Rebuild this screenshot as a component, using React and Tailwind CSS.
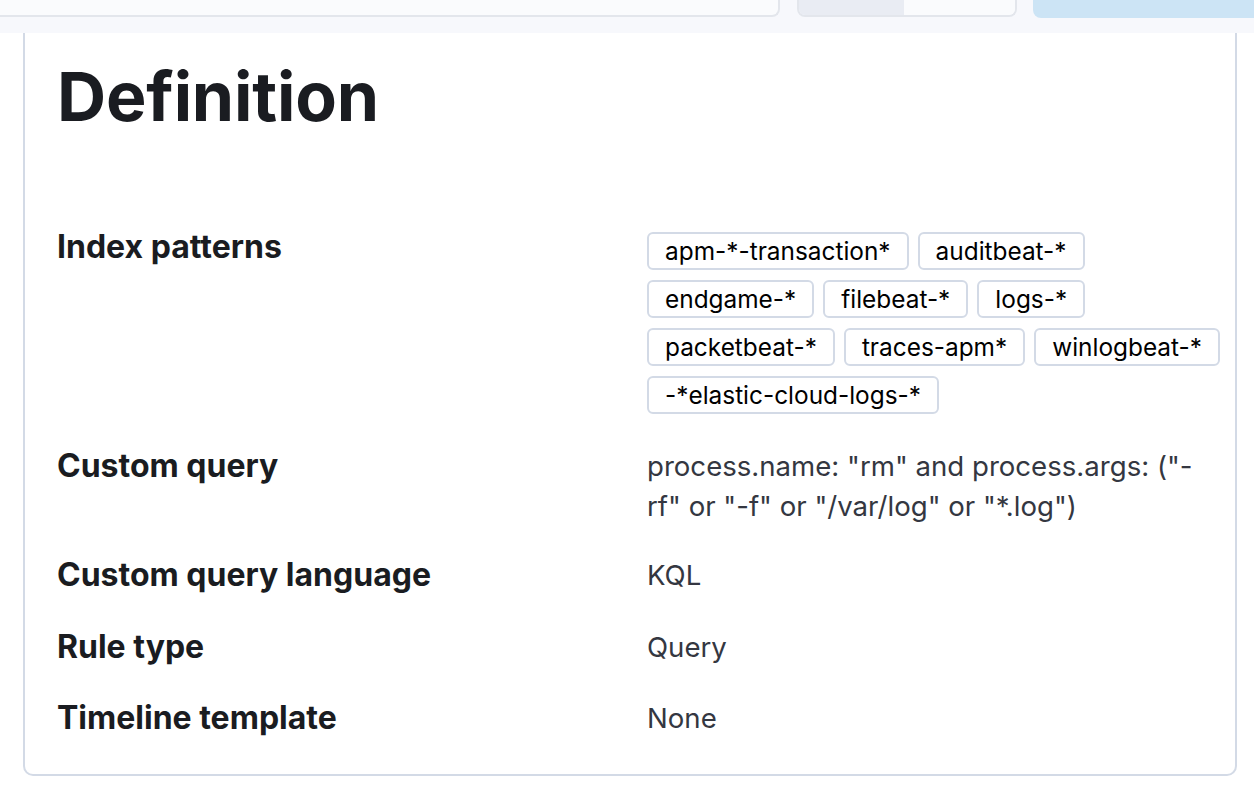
import React from "react";

const tags = [
  "apm-*-transaction*",
  "auditbeat-*",
  "endgame-*",
  "filebeat-*",
  "logs-*",
  "packetbeat-*",
  "traces-apm*",
  "winlogbeat-*",
  "-*elastic-cloud-logs-*",
];

function Row({ label, children, className = "" }) {
  return (
    <div className={"grid grid-cols-[590px_1fr] " + className}>
      <div className="text-[32px] leading-[40px] font-bold text-[#1a1c21]">{label}</div>
      <div className="text-[27.6px] leading-[40px] text-[#343741]">{children}</div>
    </div>
  );
}

export default function App() {
  return (
    <div
      className="w-[1254px] h-[796px] bg-white overflow-hidden"
      style={{ fontFamily: "Inter, 'Noto Sans', sans-serif" }}
    >
      <div className="h-[33px] bg-[#f7f8fc] flex items-start">
        <div className="w-[780px] h-[17px] bg-[#fafbfd] border-b-2 border-r-2 border-[#e3e6ec] rounded-br-[8px]" />
        <div className="ml-[17px] w-[220px] h-[17px] flex border-b-2 border-x-2 border-[#e3e6ec] rounded-b-[8px] overflow-hidden">
          <div className="w-[105px] bg-[#e9ecf3]" />
          <div className="flex-1 bg-[#fafbfd]" />
        </div>
        <div className="ml-[16px] flex-1 h-[18px] bg-[#cce4f5] rounded-bl-[8px]" />
      </div>
      <div className="ml-[23px] mr-[17px] border-x-2 border-b-2 border-[#d3dae6] rounded-b-[10px] pl-[32px] pr-[14px] pt-[22px] pb-[36px]">
        <h2 className="text-[68px] leading-[82px] font-bold text-[#1a1c21] tracking-[-0.003em]">Definition</h2>
        <div className="mt-[90px]">
          <Row label="Index patterns">
            <div className="flex flex-wrap gap-x-[9px] gap-y-[10px] pt-[5px]">
              {tags.map((t) => (
                <span
                  key={t}
                  className="h-[38px] px-[16px] flex items-center border-2 border-[#d3dae6] rounded-[6px] text-[24.4px] text-black leading-none"
                >
                  {t}
                </span>
              ))}
            </div>
          </Row>
          <Row label="Custom query" className="mt-[32px]">
            process.name: "rm" and process.args: ("-rf" or "-f" or "/var/log" or "*.log")
          </Row>
          <Row label="Custom query language" className="mt-[29px]">KQL</Row>
          <Row label="Rule type" className="mt-[32px]">Query</Row>
          <Row label="Timeline template" className="mt-[31px]">None</Row>
        </div>
      </div>
    </div>
  );
}
